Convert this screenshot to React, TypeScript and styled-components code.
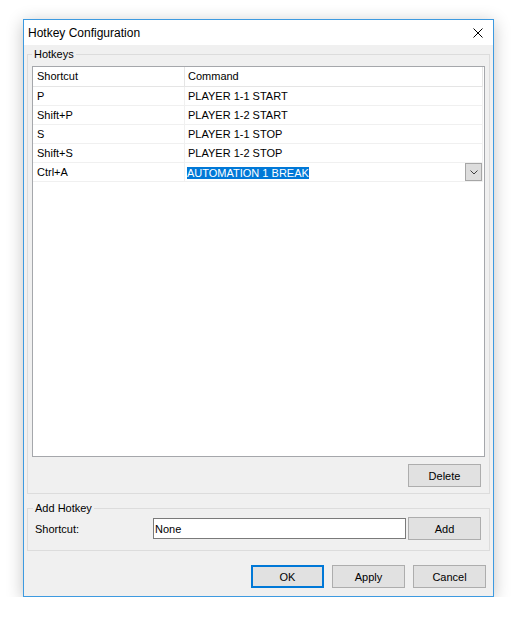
import React from "react";
import styled, { createGlobalStyle } from "styled-components";

const GlobalStyle = createGlobalStyle`
  html, body {
    margin: 0;
    padding: 0;
    background: #fff;
  }
  body {
    font-family: "Liberation Sans", Arial, sans-serif;
    font-size: 11px;
    color: #000;
  }
`;

const Desktop = styled.div`
  padding: 19px 0 0 23px;
`;

const Window = styled.div`
  width: 471px;
  box-sizing: border-box;
  border: 1px solid #3d9ae0;
  background: #f0f0f0;
  box-shadow: 0 3px 16px rgba(0, 0, 0, 0.24);
  display: flex;
  flex-direction: column;
`;

const TitleBar = styled.div`
  height: 25px;
  background: #fff;
  display: flex;
  align-items: center;
  justify-content: space-between;
  padding: 0 10px 0 4px;
`;

const Title = styled.span`
  font-size: 12px;
`;

const CloseButton = styled.button`
  width: 10px;
  height: 10px;
  padding: 0;
  border: none;
  background: none;
  display: flex;
  cursor: pointer;
`;

const Body = styled.div`
  padding: 3px 3px 8px;
  display: flex;
  flex-direction: column;
`;

const GroupBox = styled.fieldset<{ $pad: string }>`
  margin: 0;
  min-width: 0;
  border: 1px solid #dcdcdc;
  padding: ${(p) => p.$pad};
  & + & {
    margin-top: 8px;
  }
`;

const GroupLabel = styled.legend`
  padding: 0 2px;
  font-size: 11px;
  line-height: 13px;
`;

const ListView = styled.div`
  height: 391px;
  box-sizing: border-box;
  border: 1px solid #a5a7ab;
  background: #fff;
  overflow: hidden;
`;

const Row = styled.div`
  display: grid;
  grid-template-columns: 152px 298px;
`;

const HeaderCell = styled.div<{ $indent: number }>`
  height: 20px;
  box-sizing: border-box;
  border-right: 1px solid #e5e5e5;
  border-bottom: 1px solid #e5e5e5;
  padding-left: ${(p) => p.$indent}px;
  line-height: 19px;
  white-space: nowrap;
`;

const Cell = styled.div<{ $indent: number }>`
  height: 19px;
  box-sizing: border-box;
  border-right: 1px solid #f0f0f0;
  border-bottom: 1px solid #f0f0f0;
  padding-left: ${(p) => p.$indent}px;
  line-height: 18px;
  white-space: nowrap;
  overflow: hidden;
`;

const EditorCell = styled.div`
  height: 19px;
  box-sizing: border-box;
  border-right: 1px solid #f0f0f0;
  border-bottom: 1px solid #f0f0f0;
  display: flex;
  align-items: stretch;
`;

const Selection = styled.span`
  align-self: center;
  margin: 1px 0 0 2px;
  line-height: 12px;
  background: #0078d7;
  color: #fff;
  white-space: nowrap;
`;

const DropButton = styled.div`
  margin-left: auto;
  width: 17px;
  box-sizing: border-box;
  border: 1px solid #a6a6a6;
  background: #dddddd;
  display: flex;
  align-items: center;
  justify-content: center;
`;

const ButtonRow = styled.div<{ $top: number; $right: number }>`
  display: flex;
  justify-content: flex-end;
  gap: 8px;
  margin-top: ${(p) => p.$top}px;
  padding-right: ${(p) => p.$right}px;
`;

const Button = styled.button<{ $primary?: boolean }>`
  width: 73px;
  height: 23px;
  box-sizing: border-box;
  padding: 0;
  border: ${(p) => (p.$primary ? "2px solid #0078d7" : "1px solid #adadad")};
  background: #e1e1e1;
  font-family: inherit;
  font-size: 11px;
  color: #000;
  cursor: pointer;
`;

const FieldRow = styled.div`
  display: flex;
  align-items: center;
  height: 23px;
`;

const FieldLabel = styled.label`
  width: 120px;
  box-sizing: border-box;
  padding-left: 2px;
`;

const TextBox = styled.input`
  width: 253px;
  height: 21px;
  box-sizing: border-box;
  border: 1px solid #7a7a7a;
  padding: 0 1px;
  margin: 0 2px 0 0;
  font-family: inherit;
  font-size: 11px;
  color: #000;
  outline: none;
`;

const hotkeys = [
  { key: "P", command: "PLAYER 1-1 START" },
  { key: "Shift+P", command: "PLAYER 1-2 START" },
  { key: "S", command: "PLAYER 1-1 STOP" },
  { key: "Shift+S", command: "PLAYER 1-2 STOP" },
];

export default function App() {
  return (
    <>
      <GlobalStyle />
      <Desktop>
        <Window>
          <TitleBar>
            <Title>Hotkey Configuration</Title>
            <CloseButton aria-label="Close">
              <svg width="10" height="10" viewBox="0 0 10 10">
                <path d="M0.5 0.5 L9.5 9.5 M9.5 0.5 L0.5 9.5" stroke="#000" strokeWidth="1" />
              </svg>
            </CloseButton>
          </TitleBar>
          <Body>
            <GroupBox $pad="5px 4px 6px 4px">
              <GroupLabel>Hotkeys</GroupLabel>
              <ListView>
                <Row>
                  <HeaderCell $indent={4}>Shortcut</HeaderCell>
                  <HeaderCell $indent={3}>Command</HeaderCell>
                </Row>
                {hotkeys.map((h) => (
                  <Row key={h.key}>
                    <Cell $indent={4}>{h.key}</Cell>
                    <Cell $indent={3}>{h.command}</Cell>
                  </Row>
                ))}
                <Row>
                  <Cell $indent={4}>Ctrl+A</Cell>
                  <EditorCell>
                    <Selection>AUTOMATION 1 BREAK</Selection>
                    <DropButton>
                      <svg width="8" height="5" viewBox="0 0 8 5">
                        <path d="M0.5 0.5 L4 4 L7.5 0.5" fill="none" stroke="#404040" strokeWidth="1" />
                      </svg>
                    </DropButton>
                  </EditorCell>
                </Row>
              </ListView>
              <ButtonRow $top={7} $right={4}>
                <Button>Delete</Button>
              </ButtonRow>
            </GroupBox>
            <GroupBox $pad="2px 8px 10px 5px">
              <GroupLabel>Add Hotkey</GroupLabel>
              <FieldRow>
                <FieldLabel htmlFor="shortcut">Shortcut:</FieldLabel>
                <TextBox id="shortcut" defaultValue="None" />
                <Button>Add</Button>
              </FieldRow>
            </GroupBox>
            <ButtonRow $top={14} $right={4}>
              <Button $primary>OK</Button>
              <Button>Apply</Button>
              <Button>Cancel</Button>
            </ButtonRow>
          </Body>
        </Window>
      </Desktop>
    </>
  );
}
